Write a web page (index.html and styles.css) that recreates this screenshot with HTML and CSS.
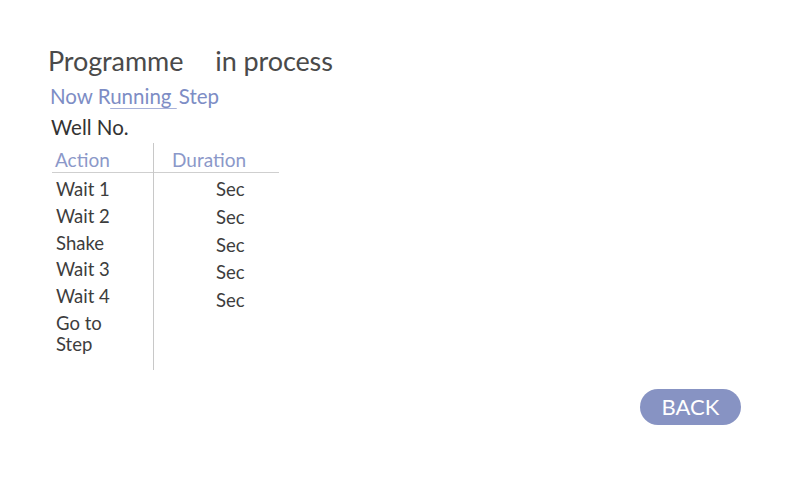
FILE: index.html
```html
<!DOCTYPE html>
<html>
<head>
<meta charset="utf-8">
<link rel="stylesheet" href="styles.css">
</head>
<body>
<div class="screen">
  <h1 class="title">Programme<span class="gap"></span>in process</h1>
  <div class="step">Now R<span class="ul">unning&nbsp;</span>Step</div>
  <div class="well">Well No.</div>
  <div class="table">
    <div class="col col-action">
      <div class="head">Action</div>
      <div class="cells">
        <div class="cell">Wait 1</div>
        <div class="cell">Wait 2</div>
        <div class="cell">Shake</div>
        <div class="cell">Wait 3</div>
        <div class="cell">Wait 4</div>
        <div class="cell multi">Go to<br>Step</div>
      </div>
    </div>
    <div class="col col-dur">
      <div class="head">Duration</div>
      <div class="cells">
        <div class="cell sec">Sec</div>
        <div class="cell sec">Sec</div>
        <div class="cell sec">Sec</div>
        <div class="cell sec">Sec</div>
        <div class="cell sec">Sec</div>
      </div>
    </div>
  </div>
  <div class="footer">
    <button class="back">BACK</button>
  </div>
</div>
</body>
</html>
```
FILE: styles.css
```css
html, body {
  margin: 0;
  padding: 0;
  background: #ffffff;
}
body {
  font-family: Lato, "Noto Sans", sans-serif;
  color: #3d3d3d;
  width: 800px;
  height: 480px;
  overflow: hidden;
}
.screen {
  padding: 44px 0 0 48px;
  display: flex;
  flex-direction: column;
}
.title {
  margin: 0;
  font-size: 27px;
  font-weight: 400;
  line-height: 34px;
  color: #4a4a4a;
  letter-spacing: -0.1px;
}
.gap {
  display: inline-block;
  width: 32px;
}
.step {
  margin: 6px 0 0 2px;
  font-size: 20.5px;
  line-height: 24px;
  color: #7d8dc5;
}
.ul {
  text-decoration: underline;
  text-decoration-color: #a7b1d8;
  text-underline-offset: 4px;
  text-decoration-thickness: 1px;
  padding-right: 2px;
}
.well {
  margin: 7px 0 0 3px;
  font-size: 20.5px;
  line-height: 24px;
  color: #333333;
}
.table {
  display: flex;
  margin: 4px 0 0 4px;
  width: 227px;
}
.col {
  display: flex;
  flex-direction: column;
}
.col-action {
  width: 101px;
  border-right: 1px solid #c8c8c8;
  height: 227px;
}
.col-dur {
  flex: 1;
}
.head {
  font-size: 19px;
  line-height: 22px;
  padding-top: 6px;
  height: 23px;
  color: #8b98c9;
  border-bottom: 1px solid #cfcfcf;
}
.col-action .head {
  padding-left: 3px;
}
.col-dur .head {
  padding-left: 18px;
}
.cells {
  display: flex;
  flex-direction: column;
  padding-top: 3px;
}
.cell {
  font-size: 18.5px;
  line-height: 26.75px;
  color: #3d3d3d;
  padding-left: 4px;
}
.cell.multi {
  line-height: 21px;
  padding-top: 3px;
}
.cell.sec {
  padding-left: 62px;
  line-height: 27.75px;
}
.footer {
  display: flex;
  justify-content: flex-end;
  margin-top: 19px;
  padding-right: 59px;
}
.back {
  width: 101px;
  height: 36px;
  border: none;
  border-radius: 18px;
  background: #8793c3;
  color: #ffffff;
  font-family: Lato, "Noto Sans", sans-serif;
  font-size: 22px;
  padding: 0;
  line-height: 36px;
}
```
